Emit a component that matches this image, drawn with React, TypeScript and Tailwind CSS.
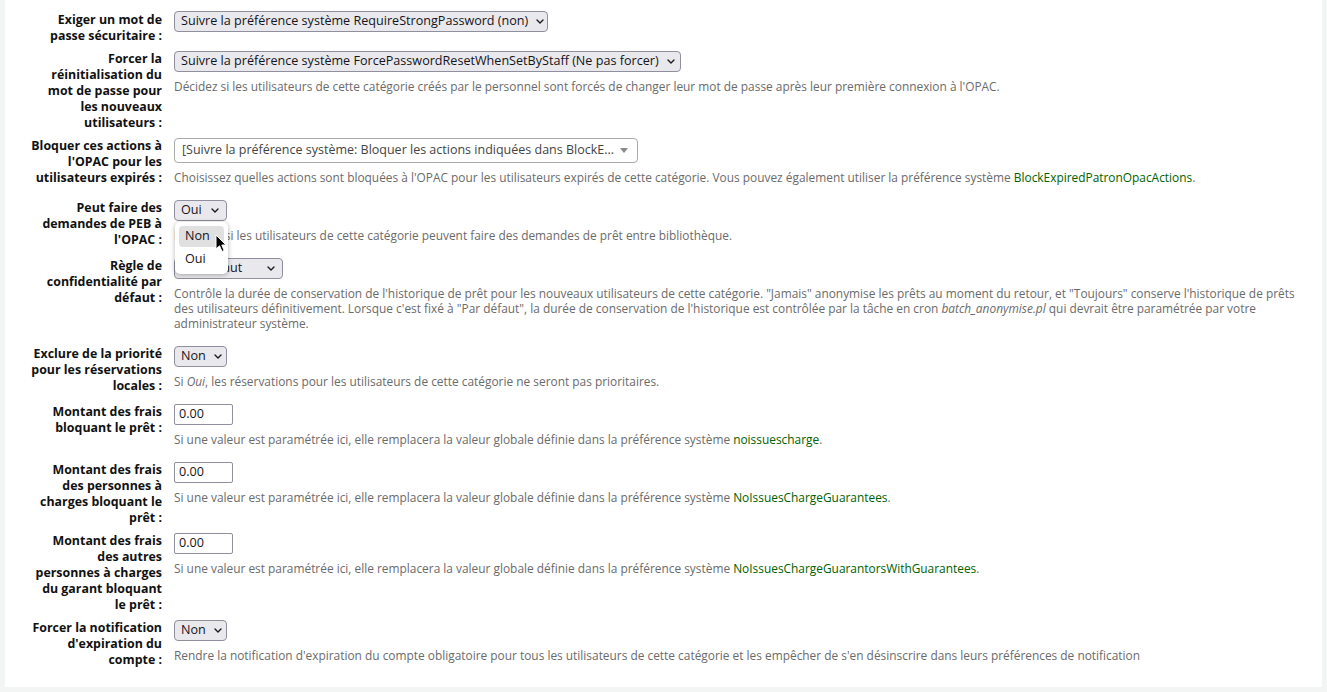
import type { ReactNode } from "react";

const FONT = { fontFamily: '"Open Sans", "Noto Sans", sans-serif' };

function Chevron() {
  return (
    <svg width="8" height="5" viewBox="0 0 8 5" className="shrink-0">
      <path d="M1 1 L4 4 L7 1" fill="none" stroke="#1b1b1f" strokeWidth="1.4" strokeLinecap="round" strokeLinejoin="round" />
    </svg>
  );
}

// select natif (style Firefox)
function Sel({ text, className, children }: { text: string; className: string; children?: ReactNode }) {
  return (
    <div className={`relative flex items-center justify-between gap-[8px] h-[21px] pl-[6px] pr-[7px] border border-[#8f8f9d] bg-[#e9e9ed] rounded-[4px] text-[12.6px] text-[#15141a] whitespace-nowrap ${className}`}>
      <span>{text}</span>
      <Chevron />
      {children}
    </div>
  );
}

function Input() {
  return (
    <div className="flex items-center w-[59px] h-[21px] pl-[4px] border border-[#8f8f9d] bg-white rounded-[2px] text-[12.6px] text-[#15141a]">
      0.00
    </div>
  );
}

function Hint({ children }: { children: ReactNode }) {
  return <div className="mt-[7px] mb-[8px] text-[11.9px] leading-[15px] text-[#6b6b6b]">{children}</div>;
}

function Pref({ name }: { name: string }) {
  return <a className="text-[#006100]">{name}</a>;
}

function Row({ label, children }: { label: string[]; children: ReactNode }) {
  return (
    <li className="flex mb-[7px]">
      <div className="w-[157px] shrink-0 text-right font-bold text-[12.4px] leading-[16px] text-[#111]">
        {label.map((l, i) => (
          <div key={i} className="whitespace-nowrap">{l}</div>
        ))}
      </div>
      <div className="ml-[12px] flex-1 flex flex-col items-start">{children}</div>
    </li>
  );
}

function Cursor() {
  return (
    <svg width="12" height="19" viewBox="0 0 12 19" className="absolute left-[40px] top-[12px]">
      <path d="M1 1 L1 15 L4.5 11.8 L7 17.5 L9.2 16.5 L6.8 11 L11 11 Z" fill="#000" stroke="#fff" strokeWidth="1" strokeLinejoin="round" />
    </svg>
  );
}

export default function App() {
  return (
    <div className="w-full h-[692px] bg-[#f3f4f4] px-[5px] pb-[5px]" style={FONT}>
      <div className="h-full bg-white pt-[12px]">
        <ol>
          <Row label={["Exiger un mot de", "passe sécuritaire :"]}>
            <Sel className="w-[374px] -mt-px" text="Suivre la préférence système RequireStrongPassword (non)" />
          </Row>

          <Row label={["Forcer la", "réinitialisation du", "mot de passe pour", "les nouveaux", "utilisateurs :"]}>
            <Sel className="w-[507px]" text="Suivre la préférence système ForcePasswordResetWhenSetByStaff (Ne pas forcer)" />
            <Hint>
              Décidez si les utilisateurs de cette catégorie créés par le personnel sont forcés de changer leur mot de passe après leur première connexion à l'OPAC.
            </Hint>
          </Row>

          <Row label={["Bloquer ces actions à", "l'OPAC pour les", "utilisateurs expirés :"]}>
            <div className="flex items-center justify-between w-[464px] h-[25px] pl-[7px] pr-[9px] border border-[#aaa] bg-white rounded-[4px] text-[12.5px] text-[#444] whitespace-nowrap">
              <span>[Suivre la préférence système: Bloquer les actions indiquées dans BlockE…</span>
              <svg width="8" height="5" viewBox="0 0 8 5">
                <path d="M0 0 L8 0 L4 5 Z" fill="#888" />
              </svg>
            </div>
            <Hint>
              Choisissez quelles actions sont bloquées à l'OPAC pour les utilisateurs expirés de cette catégorie. Vous pouvez également utiliser la préférence système <Pref name="BlockExpiredPatronOpacActions" />.
            </Hint>
          </Row>

          <Row label={["Peut faire des", "demandes de PEB à", "l'OPAC :"]}>
            <Sel className="w-[53px] z-10" text="Oui">
              {/* liste déroulante ouverte */}
              <div className="absolute left-0 top-[21px] w-[53px] p-[4px] flex flex-col gap-[2px] bg-white rounded-[5px] shadow-[0_1px_5px_rgba(0,0,0,0.3)] text-[12.6px]">
                <div className="h-[21px] flex items-center px-[6px] rounded-[4px] bg-[#e0e0e0]">Non</div>
                <div className="h-[21px] flex items-center px-[6px]">Oui</div>
                <Cursor />
              </div>
            </Sel>
            <Hint>Indiquez si les utilisateurs de cette catégorie peuvent faire des demandes de prêt entre bibliothèque.</Hint>
          </Row>

          <Row label={["Règle de", "confidentialité par", "défaut :"]}>
            <Sel className="w-[109px]" text="Par défaut" />
            <Hint>
              Contrôle la durée de conservation de l'historique de prêt pour les nouveaux utilisateurs de cette catégorie. "Jamais" anonymise les prêts au moment du retour, et "Toujours" conserve l'historique de prêts
              <br />
              des utilisateurs définitivement. Lorsque c'est fixé à "Par défaut", la durée de conservation de l'historique est contrôlée par la tâche en cron <i>batch_anonymise.pl</i> qui devrait être paramétrée par votre
              <br />
              administrateur système.
            </Hint>
          </Row>

          <Row label={["Exclure de la priorité", "pour les réservations", "locales :"]}>
            <Sel className="w-[53px]" text="Non" />
            <Hint>
              Si <i>Oui</i>, les réservations pour les utilisateurs de cette catégorie ne seront pas prioritaires.
            </Hint>
          </Row>

          <Row label={["Montant des frais", "bloquant le prêt :"]}>
            <Input />
            <Hint>
              Si une valeur est paramétrée ici, elle remplacera la valeur globale définie dans la préférence système <Pref name="noissuescharge" />.
            </Hint>
          </Row>

          <Row label={["Montant des frais", "des personnes à", "charges bloquant le", "prêt :"]}>
            <Input />
            <Hint>
              Si une valeur est paramétrée ici, elle remplacera la valeur globale définie dans la préférence système <Pref name="NoIssuesChargeGuarantees" />.
            </Hint>
          </Row>

          <Row label={["Montant des frais", "des autres", "personnes à charges", "du garant bloquant", "le prêt :"]}>
            <Input />
            <Hint>
              Si une valeur est paramétrée ici, elle remplacera la valeur globale définie dans la préférence système <Pref name="NoIssuesChargeGuarantorsWithGuarantees" />.
            </Hint>
          </Row>

          <Row label={["Forcer la notification", "d'expiration du", "compte :"]}>
            <Sel className="w-[53px]" text="Non" />
            <Hint>
              Rendre la notification d'expiration du compte obligatoire pour tous les utilisateurs de cette catégorie et les empêcher de s'en désinscrire dans leurs préférences de notification
            </Hint>
          </Row>
        </ol>
      </div>
    </div>
  );
}
